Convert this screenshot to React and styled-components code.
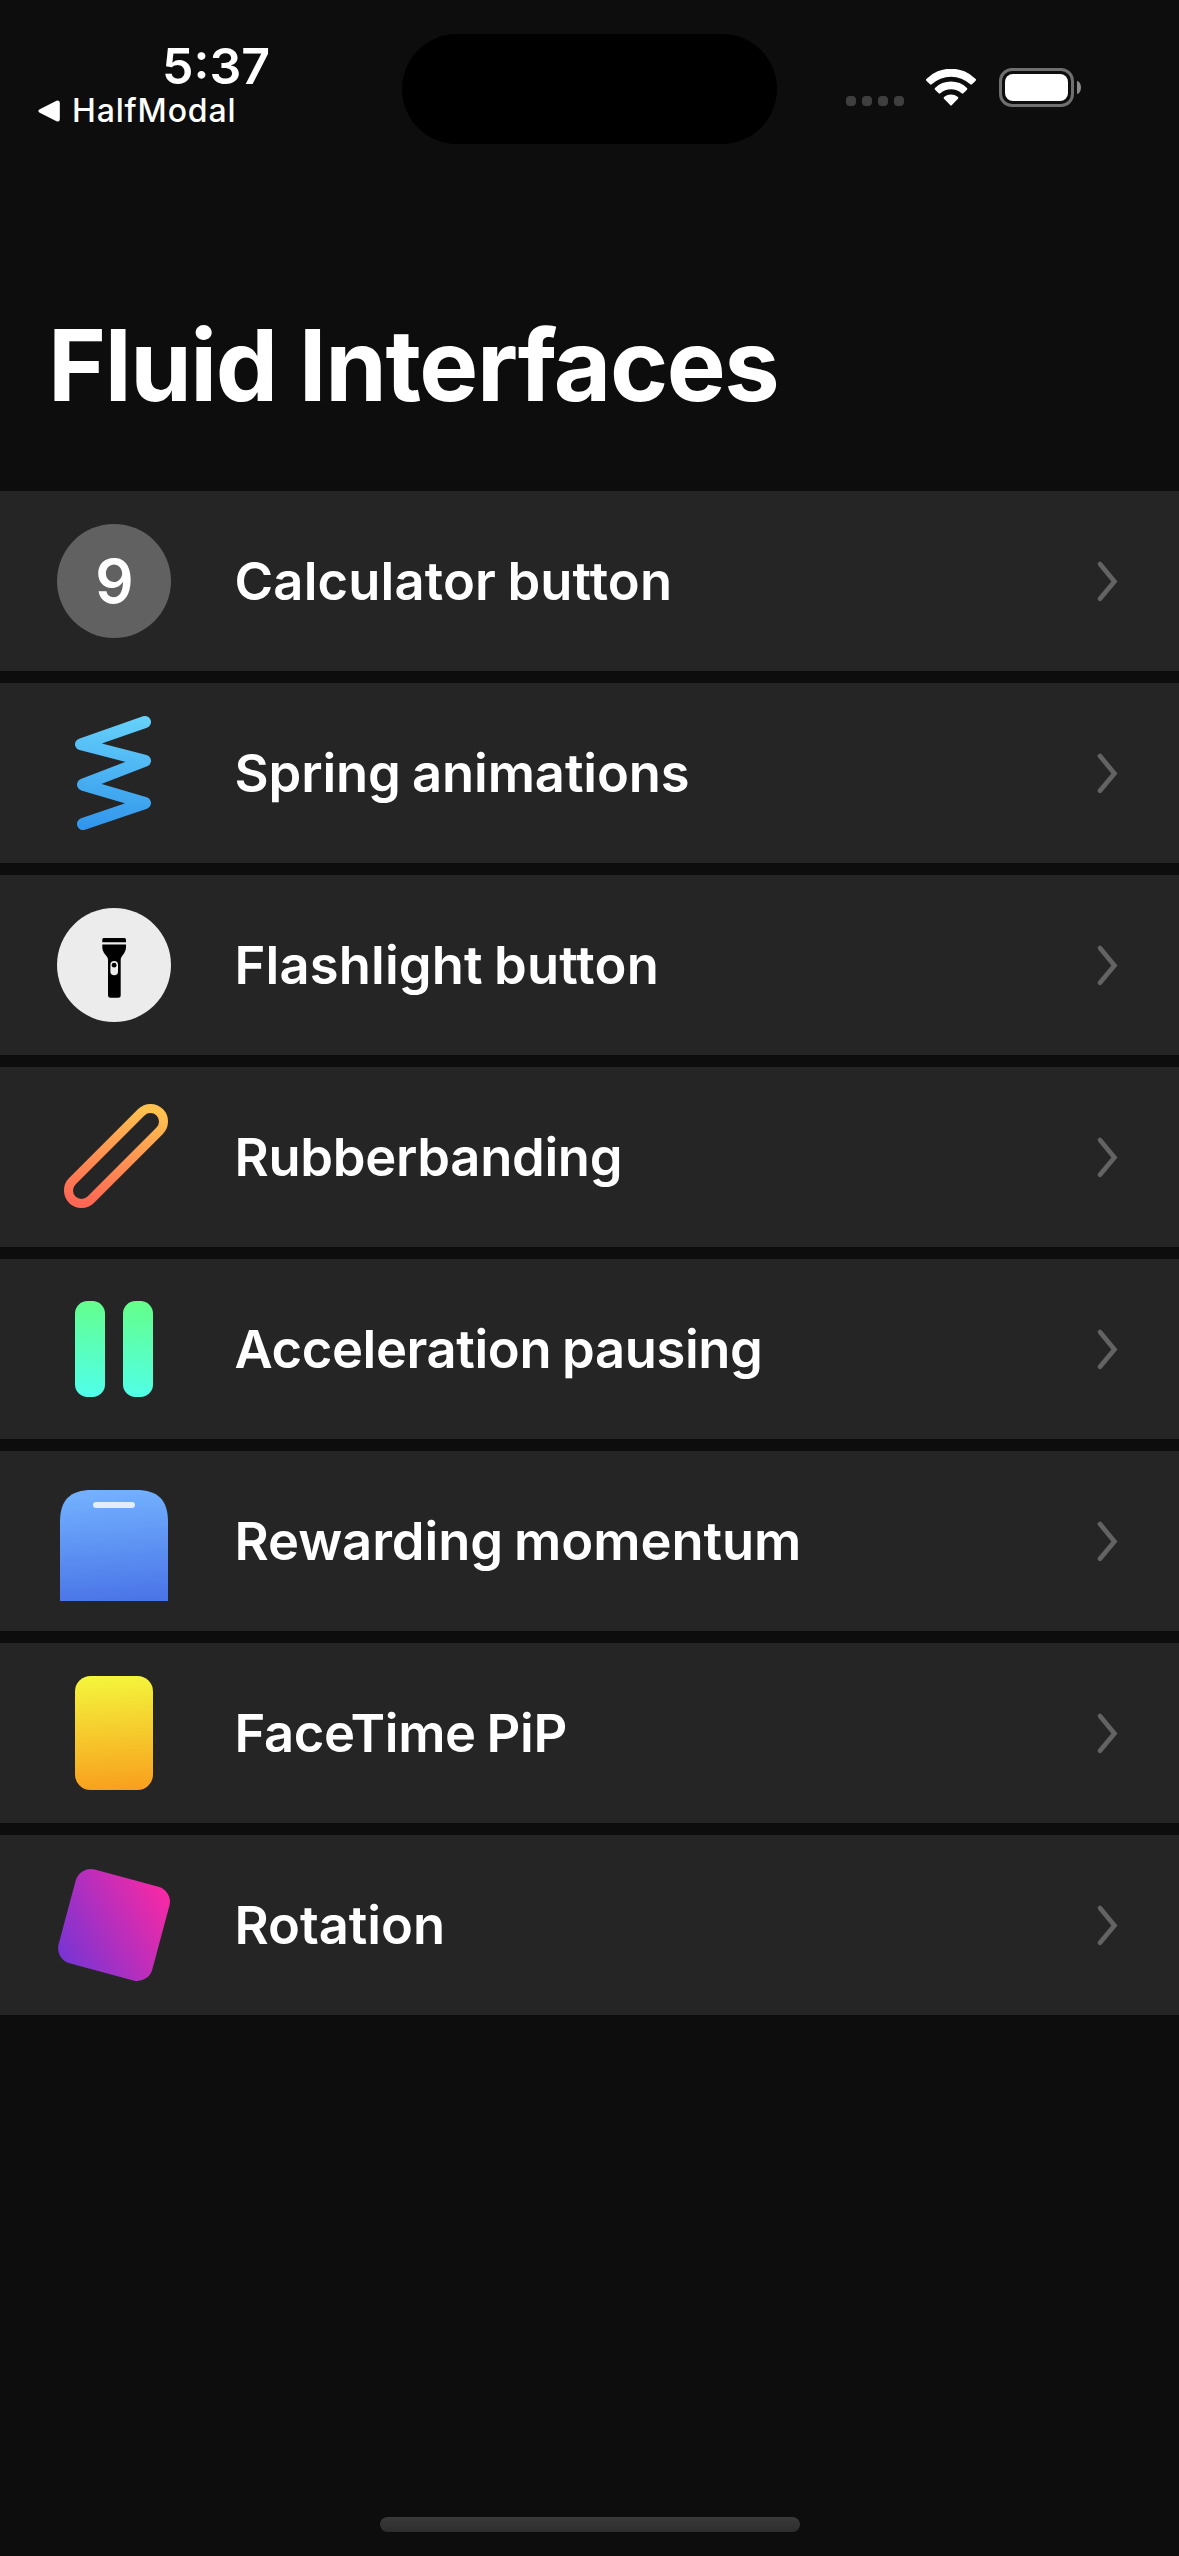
import React from "react";
import styled, { createGlobalStyle } from "styled-components";

const GlobalStyle = createGlobalStyle`
  *, *::before, *::after { box-sizing: border-box; }
  body { margin: 0; background: #0d0d0d; }
`;

const Screen = styled.div`
  display: flex;
  flex-direction: column;
  width: 1179px;
  height: 2556px;
  overflow: hidden;
  background: #0d0d0d;
  color: #fff;
  font-family: Inter, "Liberation Sans", sans-serif;
`;

const StatusBar = styled.header`
  display: grid;
  grid-template-columns: 402px 375px 402px;
  height: 144px;
  flex: none;
`;

const StatusLeft = styled.div`
  padding: 40px 0 0 38px;
`;

const Time = styled.div`
  margin-left: 124px;
  font-size: 50px;
  line-height: 52px;
  font-weight: 600;
  letter-spacing: 0;
  white-space: nowrap;
`;

const BackLink = styled.div`
  display: flex;
  align-items: center;
  gap: 12px;
  font-size: 32px;
  line-height: 38px;
  font-weight: 500;
  letter-spacing: 0.85px;
`;

const Island = styled.div`
  margin-top: 34px;
  height: 110px;
  border-radius: 55px;
  background: #000;
`;

const StatusRight = styled.div`
  display: flex;
  align-items: flex-start;
  padding: 68px 0 0 69px;
`;

const SignalDots = styled.div`
  display: flex;
  gap: 6px;
  margin: 28px 22px 0 0;
`;

const Dot = styled.span`
  width: 10px;
  height: 10px;
  border-radius: 4px;
  background: #3f3f3f;
`;

const WifiIcon = styled.svg`
  display: block;
  margin: 1px 23px 0 0;
`;

const Battery = styled.div`
  display: flex;
  align-items: center;
  gap: 3px;
`;

const BatteryShell = styled.div`
  width: 75px;
  height: 39px;
  padding: 3px;
  border: 3px solid #6f6f6f;
  border-radius: 13px;
`;

const BatteryCharge = styled.div`
  height: 100%;
  border-radius: 8px;
  background: #fff;
`;

const BatteryTip = styled.div`
  width: 4px;
  height: 13px;
  border-radius: 0 4px 4px 0 / 0 6.5px 6.5px 0;
  background: #8a8a8a;
`;

const Title = styled.h1`
  margin: 0;
  padding: 161px 0 66px 48px;
  font-size: 99px;
  line-height: 120px;
  font-weight: 700;
  letter-spacing: -1.4px;
  white-space: nowrap;
`;

const List = styled.ul`
  display: flex;
  flex-direction: column;
  gap: 12px;
  margin: 0;
  padding: 0;
  list-style: none;
`;

const Row = styled.li`
  display: flex;
  align-items: center;
  height: 180px;
  padding: 0 60px 0 57px;
  background: #252525;
`;

const Label = styled.span`
  flex: 1;
  margin-left: 63.5px;
  font-size: 52.5px;
  font-weight: 600;
  line-height: 64px;
  letter-spacing: ${(p) => p.$tracking}px;
  word-spacing: -2px;
  white-space: nowrap;
`;

const IconArt = styled.svg`
  display: block;
  flex: none;
  overflow: visible;
`;

const Badge = styled.div`
  display: flex;
  align-items: center;
  justify-content: center;
  flex: none;
  width: 114px;
  height: 114px;
  padding-left: ${(p) => p.$inset || 0}px;
  border-radius: 50%;
  background: ${(p) => p.$fill};
  font-size: 60px;
  line-height: 72px;
  font-weight: 600;
`;

const HomeIndicator = styled.div`
  width: 420px;
  height: 15px;
  margin: auto 0 24px 380px;
  border-radius: 8px;
  background: linear-gradient(#3a3a3a, #2d2d2d);
`;

function Art({ children }) {
  return (
    <IconArt width="114" height="114" viewBox="0 0 114 114" fill="none">
      {children}
    </IconArt>
  );
}

function Fade({ id, from, to, x1 = 52, y1 = 0, x2 = 60, y2 = 114 }) {
  return (
    <defs>
      <linearGradient id={id} gradientUnits="userSpaceOnUse" x1={x1} y1={y1} x2={x2} y2={y2}>
        <stop stopColor={from} />
        <stop offset="1" stopColor={to} />
      </linearGradient>
    </defs>
  );
}

const CalculatorIcon = () => <Badge $fill="#616161" $inset={1}>9</Badge>;

const SpringIcon = () => (
  <Art>
    <Fade id="spring" from="#66d1fa" to="#3196ec" x1={62} x2={50} />
    <path
      d="M88 6L24 28.3L88 44.7L26 68.7L88 87L26 108"
      stroke="url(#spring)"
      strokeWidth="12"
      strokeLinecap="round"
      strokeLinejoin="round"
    />
  </Art>
);

const FlashlightIcon = () => (
  <Badge $fill="#ececec">
    <Art>
      <path d="M46.5 30h21q1.5 0 1.5 1.5v2.7H45.3v-2.7q0-1.5 1.2-1.5z" fill="#000" />
      <path
        d="M45.3 36.4H69V39.5Q69 42.5 67.3 44.9L64.6 48.8Q63.7 50.2 63.7 52V87.2Q63.7 89.7 61.2 89.7H53.4Q51 89.7 51 87.2V52Q51 50.2 50 48.8L47 44.9Q45.3 42.5 45.3 39.5Z"
        fill="#000"
      />
      <rect x="53.4" y="53" width="7.6" height="14.3" rx="3.8" fill="#ececec" />
      <circle cx="57.1" cy="57.2" r="2.4" fill="#000" />
    </Art>
  </Badge>
);

const RubberbandIcon = () => (
  <Art>
    <Fade id="band" from="#ffc24f" to="#ff6654" x1={70} y1={4} x2={46} y2={108} />
    <path
      d="M84.3 12.3A13 13 0 0 1 102.7 30.7L33.7 99.7A13 13 0 0 1 15.3 81.3Z"
      stroke="url(#band)"
      strokeWidth="9"
    />
  </Art>
);

const PauseIcon = () => (
  <Art>
    <Fade id="pause" from="#64ff8c" to="#50ffe9" x1={60} y1={9} x2={52} y2={105} />
    <rect x="18" y="9" width="30" height="96" rx="12.5" fill="url(#pause)" />
    <rect x="66" y="9" width="30" height="96" rx="12.5" fill="url(#pause)" />
  </Art>
);

const MomentumIcon = () => (
  <Art>
    <Fade id="momentum" from="#73b1ff" to="#4a75e7" y1={6} y2={117} />
    <path d="M3 117V38C3 16 13 6 35 6H79C101 6 111 16 111 38V117Z" fill="url(#momentum)" />
    <rect x="36" y="18" width="42" height="6" rx="3" fill="#fff" fillOpacity="0.8" />
  </Art>
);

const PipIcon = () => (
  <Art>
    <Fade id="pip" from="#f4f53c" to="#f8a01e" x1={54} x2={60} />
    <rect x="18" y="0" width="78" height="114" rx="15.5" fill="url(#pip)" />
  </Art>
);

const RotationIcon = () => (
  <Art>
    <Fade id="rotation" from="#7135d6" to="#ff28a2" x1={8.5} y1={105.5} x2={105.5} y2={8.5} />
    <rect
      x="8.5"
      y="8.5"
      width="97"
      height="97"
      rx="15.5"
      fill="url(#rotation)"
      transform="rotate(15 57 57)"
    />
  </Art>
);

const Chevron = () => (
  <IconArt width="20" height="40" viewBox="0 0 20 40" fill="none">
    <path d="M1 3L15.4 20.4L1 37.7" stroke="#636363" strokeWidth="4.7" strokeLinecap="round" />
  </IconArt>
);

const interfaces = [
  { label: "Calculator button", Icon: CalculatorIcon, tracking: 0.15 },
  { label: "Spring animations", Icon: SpringIcon, tracking: -0.1 },
  { label: "Flashlight button", Icon: FlashlightIcon, tracking: 0.15 },
  { label: "Rubberbanding", Icon: RubberbandIcon, tracking: -0.3 },
  { label: "Acceleration pausing", Icon: PauseIcon, tracking: -0.38 },
  { label: "Rewarding momentum", Icon: MomentumIcon, tracking: -0.07 },
  { label: "FaceTime PiP", Icon: PipIcon, tracking: -0.38 },
  { label: "Rotation", Icon: RotationIcon, tracking: -0.05 },
];

export default function App() {
  return (
    <Screen>
      <GlobalStyle />
      <StatusBar>
        <StatusLeft>
          <Time>5:37</Time>
          <BackLink>
            <svg width="22" height="22" viewBox="0 0 22 22" fill="#fff">
              <path d="M1.3 9.5L18.5 .8Q21.8-.4 21.8 3V19Q21.8 22.4 18.5 21.2L1.3 12.5Q-.6 11 1.3 9.5Z" />
            </svg>
            <span>HalfModal</span>
          </BackLink>
        </StatusLeft>
        <Island />
        <StatusRight>
          <SignalDots>
            <Dot />
            <Dot />
            <Dot />
            <Dot />
          </SignalDots>
          <WifiIcon width="50" height="37" viewBox="0 0 150 111" fill="#fff">
            <path d="M1 35Q-1 32 1 30A104 104 0 0 1 149 30Q151 32 149 35L138 46Q136 48 133 46A85 85 0 0 0 17 46Q14 48 12 46Z" />
            <path d="M27 62Q25 59 27 57A68 68 0 0 1 123 57Q125 59 123 62L112 73Q110 75 107 73A48 48 0 0 0 43 73Q40 75 38 73Z" />
            <path d="M54 89Q51 86 55 83A33 33 0 0 1 95 83Q99 86 96 89L77 109Q75 111 73 109Z" />
          </WifiIcon>
          <Battery>
            <BatteryShell>
              <BatteryCharge />
            </BatteryShell>
            <BatteryTip />
          </Battery>
        </StatusRight>
      </StatusBar>
      <Title>Fluid Interfaces</Title>
      <List>
        {interfaces.map(({ label, Icon, tracking }) => (
          <Row key={label}>
            <Icon />
            <Label $tracking={tracking}>{label}</Label>
            <Chevron />
          </Row>
        ))}
      </List>
      <HomeIndicator />
    </Screen>
  );
}
